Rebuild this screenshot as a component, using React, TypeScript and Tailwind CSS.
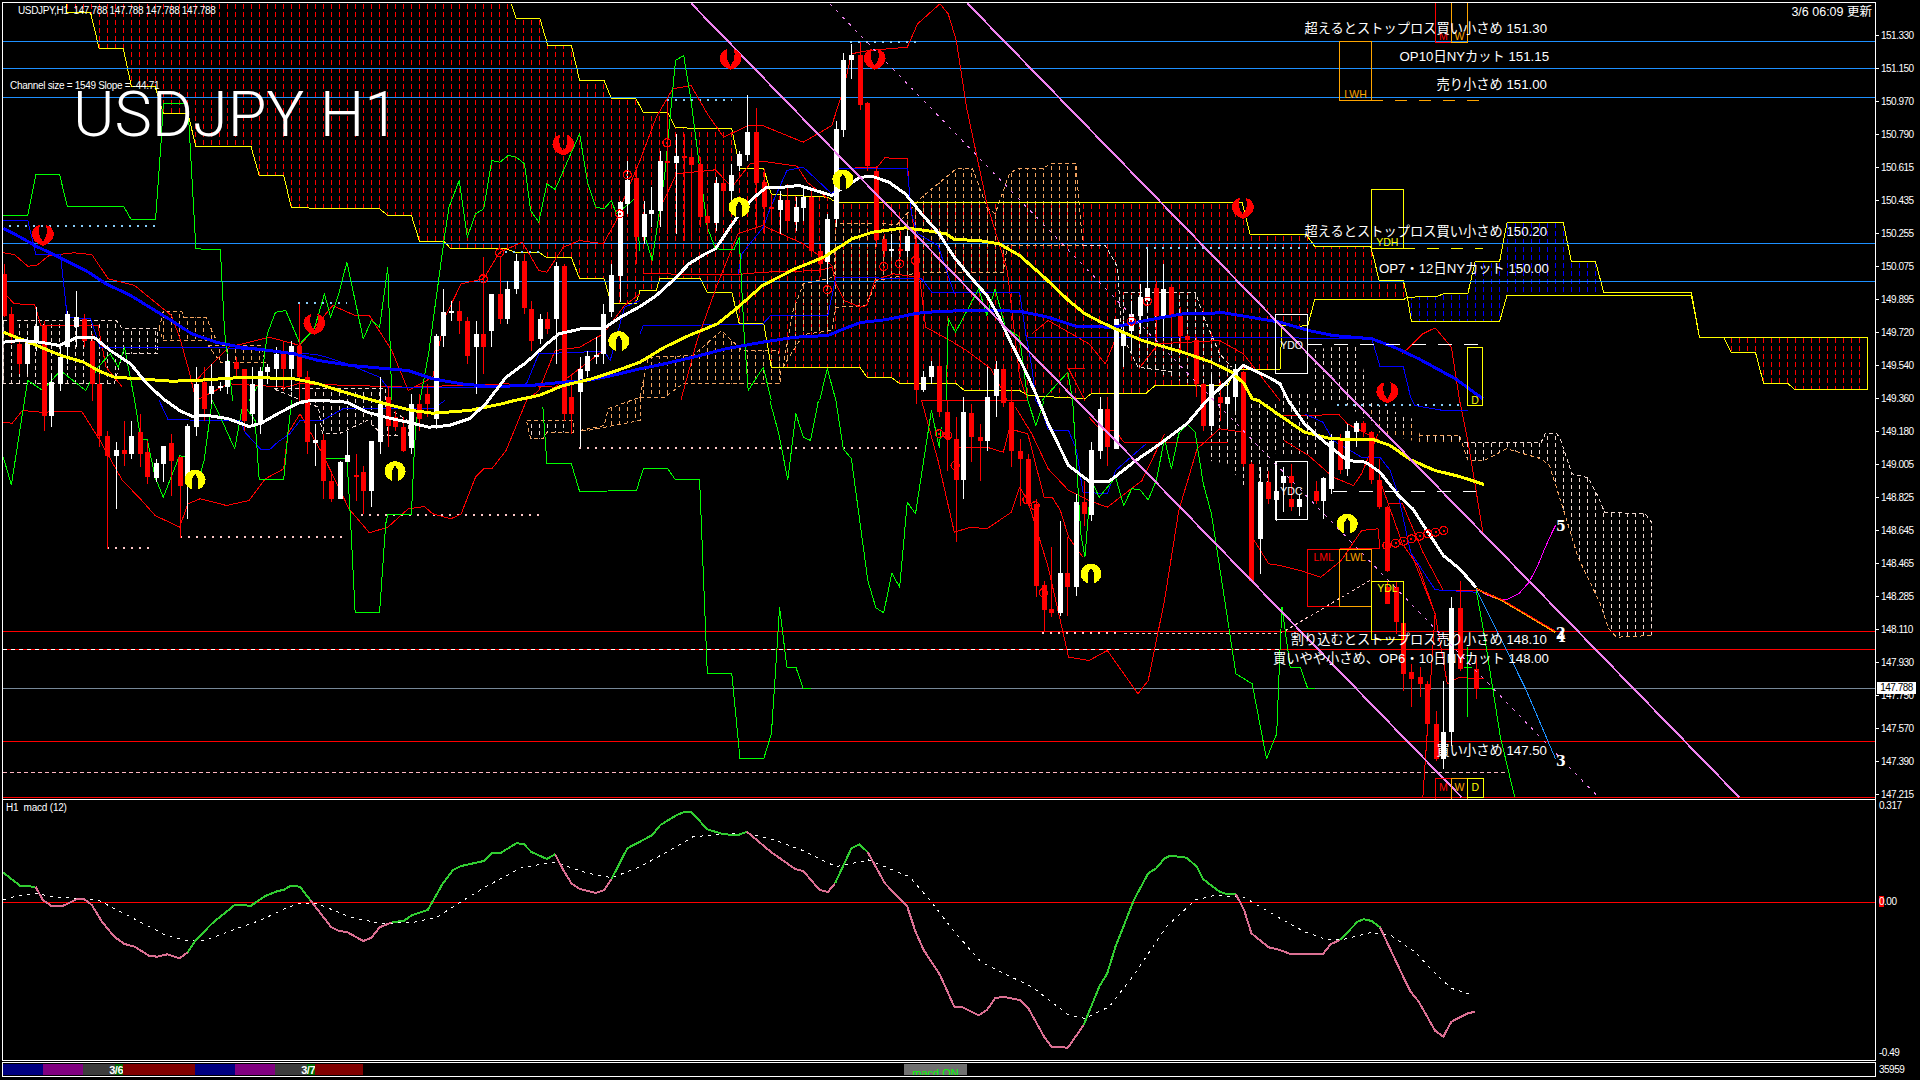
import React from 'react';

type P = [number, number];
const T: Record<string, P> = { a: [0, 0], b: [640, 0], c: [1280, 0], d: [0, 400], e: [640, 400], f: [1280, 400], g: [0, 790], h: [640, 790], i: [1280, 790] };

function parse(s: string): P[] {
  let o: P = [0, 0];
  const out: P[] = [];
  for (const tk of s.trim().split(/\s+/)) {
    if (tk.endsWith(':')) { o = T[tk[0]]; continue; }
    const [x, y] = tk.split(',').map(Number);
    out.push([+(o[0] + x / 2.45).toFixed(1), +(o[1] + y / 3).toFixed(1)]);
  }
  return out;
}
const str = (p: P[]) => p.map((q) => q.join(',')).join(' ');

const Line = ({ d, c, w = 1, dash }: { d: string; c: string; w?: number; dash?: string }) => (
  <polyline points={str(parse(d))} fill="none" stroke={c} strokeWidth={w} strokeDasharray={dash} strokeLinejoin="round" />
);

let hid = 0;
const Hatch = ({ d, c, dash = '5 3', off = 0, outline }: { d: string; c: string; dash?: string; off?: number; outline?: string }) => {
  const pts = parse(d);
  const id = `h${hid++}`;
  const xs = pts.map((p) => p[0]);
  const ys = pts.map((p) => p[1]);
  const x0 = Math.floor((Math.min(...xs) - 3.5) / 8);
  const x1 = Math.ceil((Math.max(...xs) - 3.5) / 8);
  const lines: React.ReactNode[] = [];
  for (let k = x0; k <= x1; k++) {
    const x = 3.5 + 8 * k;
    lines.push(<line key={k} x1={x} x2={x} y1={Math.min(...ys)} y2={Math.max(...ys)} stroke={c} strokeDasharray={dash} strokeDashoffset={off} />);
  }
  return (
    <g>
      <clipPath id={id}><polygon points={str(pts)} /></clipPath>
      <g clipPath={`url(#${id})`}>{lines}</g>
      {outline && <polygon points={str(pts)} fill="none" stroke={outline} strokeDasharray="4 3" />}
    </g>
  );
};

const Candles = ({ t, s }: { t: string; s: string }) => {
  const o = T[t];
  return (
    <g>
      {s.split(';').map((row, i) => {
        const r = row.trim().split(/\s+/);
        if (r.length < 4) return null;
        const x = Math.round(o[0] + +r[0] / 2.45);
        const bt = o[1] + +r[1] / 3;
        const bb = o[1] + +r[2] / 3;
        const c = r[3] === 'r' ? '#ff0000' : '#ffffff';
        const wt = r[4] ? o[1] + +r[4] / 3 : bt;
        const wb = r[5] ? o[1] + +r[5] / 3 : bb;
        return (
          <g key={i}>
            <rect x={x} y={wt} width={1} height={Math.max(wb - wt, 1)} fill={c} />
            <rect x={x - 2} y={bt} width={5} height={Math.max(bb - bt, 2)} fill={c} />
          </g>
        );
      })}
    </g>
  );
};

const SymR = ({ at }: { at: string }) => {
  const [[x, y]] = parse(at);
  return <path transform={`translate(${x} ${y})`} fill="#ff0000" d="M-3,-10 C-14,-7 -14,7 0,11 C14,7 14,-7 3,-10 C5,-4 4,2 1,5 L0,7 L-1,5 C-4,2 -5,-4 -3,-10Z" />;
};
const SymY = ({ at }: { at: string }) => {
  const [[x, y]] = parse(at);
  return (
    <g transform={`translate(${x} ${y})`}>
      <ellipse rx={10.5} ry={10} fill="#ffff00" />
      <path fill="#000" d="M-3,10 L-3,-1 L0,-6 L3,-1 L3,10Z" />
    </g>
  );
};
const Circ = ({ at }: { at: string }) => (
  <g>
    {parse(at).map(([x, y], i) => (
      <g key={i}>
        <circle cx={x} cy={y} r={4} fill="none" stroke="#ff0000" strokeWidth={1.3} />
        <rect x={x - 1} y={y - 1} width={2} height={2} fill="#ff0000" />
      </g>
    ))}
  </g>
);
const Box = ({ d, c, label, lx, ly }: { d: string; c: string; label?: string; lx?: number; ly?: number }) => {
  const [[x0, y0], [x1, y1]] = parse(d);
  return (
    <g>
      <rect x={x0} y={y0} width={x1 - x0} height={y1 - y0} fill="none" stroke={c} />
      {label && <text shapeRendering="auto" x={(x0 + x1) / 2 + (lx ?? 0)} y={ly ?? y1 - 3} textAnchor="middle" fontSize={10.5} fill={c} stroke="none">{label}</text>}
    </g>
  );
};

const H = ({ y, c, dash, x0 = 3, x1 = 1875, w = 1 }: { y: number; c: string; dash?: string; x0?: number; x1?: number; w?: number }) => (
  <line x1={x0} x2={x1} y1={y} y2={y} stroke={c} strokeDasharray={dash} strokeWidth={w} />
);

const CandlesA = `10 820 945 r 790 950; 27 940 1010 r 920 1030; 47 1030 1090 r 1010 1120; 67 1020 1090 w 1010 1120; 87 975 1020 w 920 1050; 107 975 1245 r 960 1290; 125 1145 1245 w 1120 1280; 146 1068 1150 w 1040 1170; 165 940 1040 w 930 1090; 185 950 978 w 870 1040; 205 955 1020 r 940 1040; 225 1020 1150 r 1000 1200; 243 1150 1305 r 1120 1340; 263 1305 1365 r 1290 1645; 283 1348 1365 w 1323 1525; 303 1348 1360 r 1260 1395; 322 1305 1360 w 1260 1375; 342 1295 1360 r 1240 1400; 361 1355 1430 r 1320 1450; 381 1387 1432 w 1375 1445; 400 1335 1390 w 1335 1445; 420 1328 1380 r 1300 1485; 440 1370 1455 r 1370 1612; 459 1275 1425 w 1270 1555; 479 1150 1278 w 1100 1305; 500 1145 1225 r 1100 1260; 518 1155 1180 w 1090 1210; 538 1155 1160 w 1145 1170; 557 1080 1160 w 1060 1180; 577 1085 1105 r 1070 1130; 597 1105 1260 r 1105 1290; 617 1150 1240 w 1100 1270; 636 1110 1270 w 1100 1300; 655 1100 1115 w 1090 1150; 675 1060 1105 w 1040 1160; 694 1060 1105 r 1020 1170; 714 1035 1105 w 1020 1170; 733 1035 1130 r 910 1200; 753 1130 1325 r 1110 1360; 772 1318 1328 w 1270 1395; 792 1318 1442 r 1300 1495; 812 1440 1495 r 1420 1505; 832 1383 1495 w 1380 1495; 851 1363 1385 w 1290 1385; 871 1422 1428 r 1360 1500; 890 1415 1470 r 1395 1540; 910 1322 1470 w 1320 1520; 930 1210 1325 w 1130 1360; 950 1190 1275 r 1160 1340; 968 1250 1278 r 1230 1290; 988 1278 1350 r 1250 1355; 1008 1210 1343 w 1180 1360; 1027 1210 1255 r 1180 1290; 1047 1180 1210 r 1150 1250; 1067 1005 1255 w 1000 1285; 1086 935 1005 w 865 1040; 1106 930 935 w 900 960; 1125 930 960 r 900 1000; 1145 960 1065 r 950 1090; 1165 1000 1040 w 960 1180; 1184 1000 1040 r 770 1120; 1204 880 990 w 880 1040; 1224 880 955 r 770 970; 1243 865 955 w 840 970; 1263 782 865 w 760 880; 1283 782 922 r 760 940; 1302 925 1020 r 900 1050; 1322 955 1015 w 940 1030; 1341 955 985 r 935 1000; 1361 795 955 w 785 1090; 1381 795 1240 r 790 1260; 1400 1190 1240 r 1120 1300; 1420 1105 1175 w 1070 1340; 1439 1065 1110 w 1050 1130; 1459 1062 1068 w 1010 1090; 1478 940 1060 w 910 1090; 1498 822 935 w 790 950; 1518 605 825 w 600 905; 1537 537 610 w 480 640; 1557 533 710 r 500 790`;
const CandlesB = `9 640 710 w 600 730; 28 628 640 w 560 680; 48 480 630 w 450 680; 67 480 488 r 300 700; 87 465 488 w 400 700; 107 465 470 r 400 720; 126 468 492 r 450 720; 146 490 650 r 470 680; 165 645 668 r 620 700; 185 547 668 w 530 690; 204 547 572 r 500 640; 224 522 570 w 490 640; 243 460 495 w 450 510; 263 395 462 w 282 480; 283 395 548 r 322 680; 303 545 620 r 505 700; 322 618 625 r 580 660; 342 597 627 w 570 700; 361 597 660 r 550 690; 381 618 665 w 590 690; 400 590 622 w 560 660; 420 590 752 r 570 770; 440 752 790 r 730 830; 459 655 785 w 640 850; 479 385 655 w 360 680; 498 178 388 w 158 410; 518 162 178 w 130 235; 538 162 312 r 125 328; 557 308 495 r 305 510; 577 510 718 r 495 740; 597 715 752 r 700 770; 616 745 750 w 700 770; 636 745 750 r 690 770; 655 705 752 w 690 770; 675 730 1168 r 710 1210; 694 1130 1168 w 1110 1175; 714 1095 1130 w 1080 1150; 733 1095 1235 r 1050 1250; 753 1233 1315 r 1200 1410; 773 1315 1438 r 1250 1625; 792 1235 1438 w 1190 1495; 812 1237 1310 r 1210 1385; 832 1310 1322 r 1270 1440; 851 1190 1322 w 1100 1350; 871 1105 1185 w 1080 1250; 890 1105 1208 r 1090 1220; 910 1205 1350 r 1160 1400; 930 1350 1375 r 1315 1515; 950 1375 1510 r 1360 1515; 969 1510 1755 r 1495 1790; 989 1752 1828 r 1740 1895; 1008 1825 1838 r 1640 1848; 1028 1717 1838 w 1560 1845; 1047 1717 1760 r 1610 1845; 1067 1503 1760 w 1480 1785; 1087 1503 1540 r 1440 1575; 1106 1348 1543 w 1325 1560; 1126 1225 1350 w 1190 1375; 1145 1225 1340 r 1190 1395; 1165 955 1345 w 955 1200; 1184 1000 1035 w 960 1100; 1204 940 990 w 900 1050; 1224 890 945 w 850 1000; 1243 862 900 w 745 930; 1263 862 945 r 840 1020; 1282 865 950 w 790 1010; 1302 860 945 r 850 1010; 1322 945 1005 r 920 1060; 1341 1005 1018 r 1000 1060; 1361 1018 1150 r 1010 1190; 1380 1150 1275 r 1150 1290; 1400 1150 1275 w 1120 1290; 1420 1190 1208 r 1140 1260; 1439 1190 1210 w 1140 1280; 1458 1105 1190 w 1090 1230; 1478 1115 1390 r 1110 1400; 1498 1390 1740 r 1385 1745; 1518 1445 1615 w 1400 1720; 1538 1445 1495 r 1410 1510; 1557 1472 1498 w 1380 1560`;
const CandlesF = `8 225 248 w 200 335; 28 225 248 r 190 330; 28 295 318 r 280 330; 47 295 318 w 280 345; 87 270 300 r 240 310; 106 232 300 w 230 355; 126 120 265 w 100 280; 146 115 208 r 100 220; 165 90 205 w 70 225; 185 68 95 w 60 140; 204 68 95 r 60 110; 224 95 238 r 90 250; 243 238 320 r 175 325; 263 318 512 r 315 515; 263 560 610 r 540 610; 283 560 665 r 540 700; 302 668 820 r 665 870; 322 815 835 r 790 920; 342 828 850 r 800 890; 361 850 970 r 840 1000; 381 970 1075 r 930 1080; 400 995 1075 w 840 1105; 420 622 995 w 590 1035; 440 622 805 r 540 810; 479 805 865 r 770 895`;

const cloudRed = `a: 1253,10 1265,55 1323,55 1342,135 1400,135 1420,240 1480,240 1498,295 1558,295 b: 8,335 68,335 87,382 225,385 245,505 303,505 322,582 460,590 480,605 1475,605 1495,703 1568,703 c: 65,703 85,738 222,738 230,775 243,840 302,840 312,890 302,898 85,898 68,975 40,978 5,975 b: 1568,1108 1460,1108 1440,1155 1262,1155 1240,1178 1105,1180 1090,1195 950,1185 930,1170 795,1170 775,1150 637,1150 615,1130 556,1130 540,1102 322,1102 303,968 243,968 225,875 165,875 148,835 48,835 40,870 0,870 a: 1558,910 1498,910 1480,835 1420,835 1400,772 1340,772 1320,755 1262,755 1240,745 1105,745 1088,723 1028,723 1008,645 950,645 930,625 714,622 695,525 635,525 615,438 480,438 460,338 400,338 380,258 322,258 302,145 243,145 222,37 163,37 163,10`;
const stairU = `a: 1253,10 1265,55 1323,55 1342,135 1400,135 1420,240 1480,240 1498,295 1558,295 b: 8,335 68,335 87,382 225,385 245,505 303,505 322,582 460,590 480,605 1475,605 1495,703 1568,703 c: 65,703 85,738 222,738 230,775 243,840 302,840 312,890 385,888 400,880 460,880 478,784 538,784 556,667 694,667 714,784 773,784 793,875 1008,875 1028,1012 1438,1012`;
const stairL = `a: 163,10 163,37 222,37 243,145 302,145 322,258 380,258 400,338 460,338 480,438 615,438 635,525 695,525 714,622 930,625 950,645 1008,645 1028,723 1088,723 1105,745 1240,745 1262,755 1320,755 1340,772 1400,772 1420,835 1480,835 1498,910 1558,910 b: 0,870 40,870 48,835 148,835 165,875 225,875 243,968 303,968 322,1102 540,1102 556,1130 615,1130 637,1150 775,1150 795,1170 930,1170 950,1185 1090,1195 1105,1180 1240,1178 1262,1155 1440,1155 1460,1108 1568,1108 c: 5,975 40,978 68,975 85,898 302,898 312,890 322,963 538,963 556,885 1008,885 1028,1012`;
const blueCloud = `c: 312,890 385,888 400,880 460,880 478,784 538,784 556,667 694,667 714,784 773,784 793,875 1008,875 1028,885 556,885 538,963 322,963`;
const redTail = `c: 1028,1012 1438,1012 1438,1168 1262,1168 1245,1150 1185,1150 1165,1056 1106,1056 1088,1012`;

const PALE = '#f0d8d0';
const TAN = '#f4a460';

function MainChart() {
  return (
    <svg className="absolute inset-0 w-full h-full" viewBox="3 3 1872 795" shapeRendering="crispEdges">
      <Hatch d={cloudRed} c="#ff0000" />
      <Hatch d={blueCloud} c="#0000ff" />
      <Hatch d={redTail} c="#ff0000" />

      <Hatch d="a: 8,960 285,960 300,985 385,985 385,1060 300,1060 280,1150 8,1150" c={PALE} dash="4 3" off={4} outline={PALE} />
      <Hatch d="a: 390,985 400,932 445,932 450,950 505,950 530,1020 400,1020" c={TAN} dash="4 3" off={4} outline={TAN} />
      <Hatch d="a: 510,1035 640,1035 650,1085 540,1085" c={TAN} dash="4 3" off={4} outline={TAN} />
      <Hatch d="a: 670,1165 945,1165 945,1220 1000,1260 1000,1305 940,1305 900,1260 830,1300 790,1300 780,1220" c={PALE} dash="4 3" off={4} outline={PALE} />
      <Hatch d="d: 1290,60 1405,60 1405,95 1340,95 1330,115 1300,115" c={PALE} dash="4 3" off={4} outline={TAN} />
      <Hatch d="d: 1420,90 1480,75 1490,25 1568,-10 1568,60 1440,90" c={TAN} dash="4 3" off={4} outline={TAN} />
      <Hatch d="b: 0,1190 20,1070 130,1065 200,990 250,1050 340,1050 345,1150 105,1150 60,1190" c={TAN} dash="4 3" off={4} outline={TAN} />
      <Hatch d="b: 350,1100 375,930 400,850 475,830 480,670 560,668 630,672 690,590 775,505 815,505 850,620 870,640 905,520 925,503 990,503 1005,488 1068,488 1075,600 1085,735 900,735 890,815 690,815 580,840 555,915 480,920 470,990 400,1002" c={TAN} dash="4 3" off={4} outline={TAN} />
      <Hatch d="b: 1180,880 1360,875 1385,960 1420,1060 1450,1100 1460,1200 1250,1110 1220,1100 1180,1000" c={PALE} dash="4 3" off={4} />
      <Line d="b: 1085,735 1140,735 1170,800 1180,1000 1220,1100 1310,1115" c={PALE} dash="4 3" />
      <Line d="b: 1185,875 1360,875 1385,960 1420,1060 1450,1100" c={PALE} dash="4 3" />
      <Hatch d="c: 70,1050 185,1030 205,1110 215,1200 f: 335,60 340,100 250,95 150,0 70,0" c={PALE} dash="4 3" off={4} />
      <Hatch d="f: 215,20 240,40 250,90 305,90 325,60 345,105 445,105 450,125 340,125 240,95" c={TAN} dash="4 3" off={4} />
      <Hatch d="f: 0,-30 70,-30 100,60 105,170 40,170 0,160" c={PALE} dash="4 3" off={4} />
      <Hatch d="e: 1385,100 1390,180 1440,190 1480,260 1500,370 1520,340 1568,100 1568,0 1385,0" c={PALE} dash="4 3" off={4} />
      <Hatch d="f: 340,105 440,105 450,125 640,125 650,100 678,98 690,125 715,220 755,232 780,290 795,335 895,340 910,365 910,705 825,710 805,685 785,610 730,470 695,330 660,195 640,175 555,145 500,180 460,180 450,125 350,125" c={PALE} dash="4 3" off={4} />
      <Line d="f: 450,125 640,125 650,100 678,98 690,125 715,220 755,232 780,290 795,335 895,340 910,365 910,705" c={PALE} dash="4 3" />
      <Line d="f: 340,105 440,105 460,180 500,180 555,145 640,175 660,195 695,330 730,470 785,610 805,685 825,710 910,705" c={TAN} dash="4 3" />

      <Line d={stairL} c="#ffff00" />
      <Line d={stairU} c="#ffff00" />
      <Line d="c: 1028,1012 1088,1012 1106,1056 1165,1056 1185,1150 1245,1150 1262,1168 1440,1168 1440,1012 1028,1012" c="#ffff00" />

      <H y={41} c="#1e90ff" />
      <H y={68} c="#1e90ff" />
      <H y={97} c="#1e90ff" />
      <H y={243} c="#1e90ff" />
      <H y={281} c="#1e90ff" />
      <H y={631} c="#ff0000" />
      <H y={649} c="#ff0000" />
      <H y={649} c="#ffffff" dash="4 4" x1={1280} />
      <H y={688} c="#778899" />
      <H y={741} c="#ff0000" />
      <H y={772} c="#ffb6c1" dash="4 3" x1={1508} />
      <H y={797} c="#ff0000" />

      {/* dotted range lines */}
      <g strokeWidth={2}>
        <Line d="a: 22,677 380,677" c="#87cefa" w={2} dash="2 6" />
        <Line d="b: 515,125 690,125" c="#87cefa" w={2} dash="2 6" />
        <Line d="b: 65,298 225,298" c="#87cefa" w={2} dash="2 6" />
        <Line d="a: 730,908 850,908" c="#87cefa" w={2} dash="2 6" />
        <Line d="a: 1238,755 1320,755" c="#87cefa" w={2} dash="2 6" />
        <Line d="b: 1240,743 1568,743 c: 65,743" c="#87cefa" w={2} dash="2 6" />
        <Line d="f: 140,13 440,13" c="#87cefa" w={2} dash="2 6" />
        <Line d="d: 262,443 380,443" c="#ffc8c8" w={2} dash="2 6" />
        <Line d="d: 440,410 850,410" c="#ffc8c8" w={2} dash="2 6" />
        <Line d="d: 885,342 1320,342" c="#ffc8c8" w={2} dash="2 6" />
        <Line d="d: 1418,143 1568,143 e: 690,143" c="#ffc8c8" w={2} dash="2 6" />
        <Line d="e: 985,698 1165,698" c="#ffc8c8" w={2} dash="2 6" />
        <Line d="e: 1185,700 1568,700 f: 220,540" c="#ffc8c8" dash="3 3" />
      </g>

      {/* thin red bands */}
      <Line c="#ff0000" d="a: 8,757 35,762 68,797 90,795 120,765 180,757 225,762 265,835 330,855 385,910 420,945 440,1010 465,1120 480,1200" />
      <Line c="#ff0000" d="a: 8,875 35,910 85,912 100,975 240,975 260,1100 300,1160" />
      <Line c="#ff0000" d="a: 480,1140 560,1040 660,1010 735,1035 815,915 870,945 905,945 960,1050 1000,1170 1060,1130 1090,950 1130,850 1185,835 1224,755 1280,725 1320,810 1340,815 1380,740 1420,720 1478,730 1510,660 1530,590 1568,480 b: 40,350 80,265 125,255 165,340 205,410 265,375 300,375 400,425 470,375 500,260 518,160 560,150 655,140 680,70 735,10 755,40 775,120 800,320 850,610 900,810 930,1130 950,1200 e: 690,0 730,180 770,395 810,380 850,385 910,335 930,260 950,300 1000,500 1050,770 1100,780 1145,750 1220,880 1245,840 1285,600 1320,330 1365,145 1420,85 1478,95" />
      <Line c="#ff0000" d="d: 8,65 30,68 55,30 100,35 200,32 245,120 300,240 340,290 380,345 440,380 460,310 490,295 555,315 610,300 650,235 695,205 705,100 735,40 790,160 855,325 905,397 950,380 1000,325 1040,318 1060,340 1105,355 1130,340 1165,230 1185,205 1205,205 1240,150 1290,0 a: 1320,1170 1360,1050 1420,1040 1478,1000 1530,915 1568,880" />
      <Line c="#ff0000" d="b: 100,1200 140,1020 190,850 240,700 300,675 400,730 470,795 480,850 500,900 540,920 555,915 575,840 620,820 680,830" />
      <Line c="#ff0000" d="b: 8,820 240,822 300,815 440,810 470,800" />
      <Line c="#ff0000" d="b: 50,620 90,520 185,508 225,560 270,490 300,482 385,497 410,545 460,595" />
      <Line c="#ff0000" d="b: 480,600 480,503 580,502 600,472 655,475 660,580 680,780 700,980 760,1020 800,1050 860,1105 900,1200" />
      <Line c="#ff0000" d="a: 480,1200 560,1150 700,1160 730,1150 1000,1160 1240,1150 1360,1160 1478,1050" />
      <Line c="#ff0000" d="b: 960,1000 1000,960 1100,1030 1140,1090 1170,1000" />
      <Line c="#ff0000" d="b: 1225,1100 1270,1030 1420,1020 1478,1060 1568,1200" />
      <Line c="#ff0000" d="b: 1090,1105 1050,1105 1090,1200" />
      <Line c="#ff0000" d="e: 920,20 960,100 1000,205 1050,270 1100,300 1145,320 1230,240 1285,100" />
      <Line c="#ff0000" d="e: 770,140 810,140 850,140 890,155 905,85 950,100 990,290 1010,290 1030,330 1050,410 1085,470" />
      <Line c="#ff0000" d="e: 1185,125 1440,125" />
      <Line c="#ff0000" d="e: 1100,50 1130,90 1165,90 1185,125" />
      <Line c="#ff0000" d="e: 1505,420 1540,490 1568,495" />
      <Line c="#ff0000" d="c: 300,1060 350,1000 380,982 420,1040 440,1200 f: 460,120 497,395" />
      <Line c="#ff0000" d="f: 0,45 145,43 165,70 245,120" />
      <Line c="#ff0000" d="f: 10,120 70,165 130,230 180,255 200,220 240,100" />
      <Line c="#ff0000" d="f: 0,495 50,510 100,530 150,480 200,390 240,385 245,445" />
      <Line c="#ff0000" d="f: 265,310 300,310 350,455 400,570 480,570" />
      <Line c="#ff0000" d="f: 245,240 300,430 340,500 380,640 410,850 440,830 480,835 500,835" />
      <Line c="#ff0000" d="f: 320,455 380,640 350,1190" />
      <Line c="#ff0000" d="f: 146,445 245,445" />

      {/* thin blue */}
      <Line c="#0000ff" d="a: 8,660 68,660 88,762 148,762 165,950 222,955 245,1040 300,1042 550,1042 775,1062 800,1070 850,1090 930,1130 950,1162 1200,1162 1290,1150 1320,1060 1480,1052 1495,1080 1530,920 1568,900" />
      <Line c="#0000ff" d="d: 390,0 412,58 590,60 600,95 640,148 660,148 680,125 710,100 735,60 790,60 840,25 900,25 1060,25 1090,0" />
      <Line c="#0000ff" d="b: 0,1000 8,975 300,972 320,945 460,945 480,830 690,835 715,875 930,875 945,1000 960,1100 970,1200 e: 985,30 1000,88 1050,90 1070,150 1085,275 1145,280 1165,210 1240,130" />
      <Line c="#0000ff" d="b: 240,820 250,760 302,680 320,620 360,510 400,500 470,580 490,555" />
      <Line c="#0000ff" d="b: 480,503 655,503 665,640 680,700 730,735 770,880" />
      <Line c="#0000ff" d="b: 950,1012 1568,1012 c: 225,1015 245,1098 302,1098 320,1190 f: 330,15 400,30 460,30" />
      <Line c="#0000ff" d="f: 60,40 105,65 130,120 200,170 245,170 270,210 290,285 320,455 380,568 480,575" />

      {/* green */}
      <Line c="#00ff00" d="a: 8,645 68,645 88,522 146,522 165,618 303,618 322,658 381,658 395,420 400,310 460,310 480,745 540,748 550,990 570,1200" />
      <Line c="#00ff00" d="a: 60,1200 68,1140 105,1170 148,1110 210,1170 240,1100 270,1060 290,1100 305,1040 330,1200 d: 345,118 361,118 380,230 400,290 440,165 455,170 480,268 500,180 520,0 540,50 575,145 595,10 625,60 635,238 695,238 705,100 715,0" />
      <Line c="#00ff00" d="d: 8,170 28,253 60,0" />
      <Line c="#00ff00" d="a: 610,1200 640,1140 655,1000 675,935 700,930 735,1030 770,985 795,880 810,950 830,880 850,785 890,1015 910,960 930,980 950,800 960,1200" />
      <Line c="#00ff00" d="d: 790,175 850,175 858,340 870,635 930,635 945,370 950,342 1008,342 1015,150 1020,60 a: 1050,1060 1090,700 1100,620 1125,540 1145,710 1165,640 1185,625 1205,480 1225,485 1245,465 1265,470 1285,490 1300,630 1320,665 1340,550 1360,567 1420,400 1440,550 1460,620 1480,625 1498,600 1510,640 1530,620 1555,595 1568,750" />
      <Line c="#00ff00" d="b: 8,690 30,780 60,530 87,180 107,165 125,300 165,680 185,745 230,748 243,710 255,1000 265,1170 302,1100 322,1200" />
      <Line c="#00ff00" d="d: 1330,20 1340,190 1400,190 1420,273 1560,270 1568,235 e: 8,205 68,205 87,238 146,238 165,820 225,820 245,1075 303,1075 322,1000 330,850 342,620 360,800 382,800 400,865 418,865" />
      <Line c="#00ff00" d="b: 440,1200 459,1105 480,1200 e: 480,0 498,145 518,175 558,540 578,622 597,637 617,518 636,560 655,305 675,340 714,30 733,140 738,80" />
      <Line c="#00ff00" d="e: 318,0 340,100 362,238 382,40 400,110 418,120 437,0" />
      <Line c="#00ff00" d="b: 750,1200 755,955 773,995 810,910 830,865 850,945 870,865 895,980 930,1010 950,1200 e: 970,75 990,0" />
      <Line c="#00ff00" d="b: 985,1200 1048,1115 1060,1200 e: 1065,100 1080,400 1090,470 1100,320 1110,250 1125,290 1165,230 1185,315 1205,265 1225,268 1245,298 1265,240 1285,115 1302,205 1320,100 1340,70 1360,95 1380,250 1400,340 1440,660 1460,820 1500,850 1535,1075 1560,1000 1568,750 f: 5,620 25,800 50,800 68,865 85,865" />
      <Line c="#00ff00" d="f: 480,565 500,700 540,1010 575,1190" />
      <Line c="#00ff00" d="f: 459,740 459,950" />
      <Line c="#00ff00" d="f: 450,800 470,800" />
      <Line c="#00ff00" d="f: 490,865 525,865" />

      <Candles t="a" s={CandlesA} />
      <Candles t="b" s={CandlesB} />
      <Candles t="f" s={CandlesF} />

      {/* moving averages */}
      <Line c="#0000ff" w={3} d="a: 8,683 50,710 90,738 145,770 210,810 260,850 320,885 360,915 420,960 470,1000 530,1025 590,1040 660,1050 720,1060 780,1080 860,1095 950,1105 1000,1110 1060,1135 1130,1150 1200,1158 1300,1155 1380,1145 1440,1140 1500,1125 1568,1105 b: 60,1090 130,1070 210,1045 300,1025 380,1010 460,1005 500,985 540,966 600,958 680,938 740,932 840,930 930,932 1000,950 1070,978 1160,980 1230,962 1330,940 1430,937 1568,965 c: 70,990 130,1005 225,1015 280,1040 340,1075 430,1135 497,1195" />
      <Line c="#ffff00" w={3} d="a: 8,995 60,1020 100,1040 150,1065 205,1085 240,1110 280,1130 340,1135 420,1142 480,1140 600,1130 720,1135 780,1150 830,1170 900,1195 d: 960,15 1010,30 1060,38 1150,30 1230,10 1260,0 a: 1320,1185 1380,1155 1450,1135 1500,1115 1568,1085 b: 60,1040 120,1005 190,970 240,920 300,855 380,805 450,770 520,715 570,695 650,682 700,690 750,700 770,717 830,720 880,730 930,765 990,830 1050,900 1090,940 1130,965 1165,985 1230,1020 1330,1055 1400,1085 1450,1115 1480,1150 1500,1195 e: 1515,0 1568,45 f: 60,95 125,115 230,118 270,135 320,178 380,210 440,228 500,252" />
      <Line c="#ffffff" w={3} d="a: 8,1025 50,1020 100,1025 145,1035 190,1010 230,1010 270,1050 320,1090 360,1150 400,1195 d: 440,30 470,47 510,45 560,55 610,78 640,68 680,40 730,8 760,0 790,0 850,5 900,35 950,52 1000,65 1050,80 1100,75 1150,55 1190,10 a: 1240,1130 1290,1085 1340,1030 1370,1000 1430,983 1480,983 1520,950 1568,918 b: 40,885 85,835 120,790 160,760 185,745 215,690 250,630 280,590 310,560 350,560 390,555 430,570 470,585 500,560 540,530 570,528 610,545 650,580 690,640 730,695 770,770 810,830 850,885 880,950 910,1030 940,1100 970,1180 e: 1000,70 1050,195 1100,242 1150,242 1215,180 1280,125 1340,70 1385,5 b: 1478,1095 1540,1130 1568,1150 f: 20,0 60,70 100,115 125,140 165,180 210,185 245,215 290,285 325,325 365,400 400,465 440,505 480,560" />

      {/* channel */}
      <Line c="#ee82ee" w={2} d="b: 125,8 f: 445,1190" />
      <Line c="#ee82ee" w={2} d="b: 802,8 f: 1125,1190" />
      <Line c="#ee82ee" dash="3 6" d="b: 465,10 f: 780,1190" />

      {/* projections */}
      <Line c="#ff00ff" d="f: 480,565 510,585 540,598 555,598 585,580 610,545 630,500 650,440 665,400 675,375" />
      <Line c="#ffa500" w={2} d="f: 480,565 545,600 675,695" />
      <Line c="#ff0000" d="f: 480,565 545,598 675,692" />
      <Line c="#1e90ff" d="f: 480,565 600,860 675,1075" />

      {/* boxes */}
      <Box d="c: 146,124 224,300" c="#ffa500" label="LWH" />
      <Box d="c: 381,-10 420,127" c="#ff0000" label="M" />
      <Box d="c: 420,-10 459,127" c="#ffa500" label="W" />
      <Line c="#ffa500" d="c: 224,300 497,300" dash="12 12" />
      <Box d="c: 224,567 302,745" c="#ffff00" label="YDH" />
      <Line c="#ffff00" d="c: 302,745 497,745" dash="12 12" />
      <Box d="b: 1557,943 c: 68,1120" c="#ffffff" label="YDO" ly={348} />
      <Line c="#ffffff" d="c: 68,1032 497,1032" dash="14 12" />
      <Box d="c: 459,1040 497,1216" c="#ffff00" />
      <text shapeRendering="auto" x={1475} y={403} textAnchor="middle" fontSize={10.5} fill="#ffff00">D</text>
      <Box d="e: 1556,182 f: 68,357" c="#ffffff" label="YDC" ly={494} />
      <Line c="#ffffff" d="f: 130,272 480,272" dash="14 12" />
      <Box d="f: 68,446 146,618" c="#ff0000" label="LML" ly={560} />
      <Box d="f: 146,446 224,618" c="#ffa500" label="LWL" ly={560} />
      <Box d="f: 224,542 302,718" c="#ffff00" label="YDL" ly={591} />
      <Box d="f: 381,1135 420,1200" c="#ff0000" label="M" ly={790} />
      <Box d="f: 420,1135 459,1200" c="#ffa500" label="W" ly={790} />
      <Box d="f: 459,1135 498,1190" c="#ffff00" label="D" ly={790} />

      <Circ at="a: 1184,835 1224,757 1518,640 1537,523 b: 66,427 597,798 636,790 675,780 459,868 1243,902 1204,962 e: 733,100 754,104 772,195 948,298 968,316 988,577 f: 262,435 283,428 303,422 322,415 342,407 362,400 381,395 401,390" />

      <SymR at="a: 105,703" />
      <SymR at="a: 770,970" />
      <SymR at="a: 1380,432" />
      <SymR at="b: 222,175" />
      <SymR at="b: 575,175" />
      <SymR at="b: 1477,622" />
      <SymR at="c: 263,1175" />
      <SymY at="a: 1516,1022" />
      <SymY at="d: 478,238" />
      <SymY at="d: 968,212" />
      <SymY at="b: 243,620" />
      <SymY at="b: 497,537" />
      <SymY at="e: 1105,520" />
      <SymY at="f: 165,370" />

      <g fontFamily="'DejaVu Serif', serif" fontWeight="bold" fontSize={14} fill="#fff">
        <text x={1556} y={530}>5</text>
        <text x={1556} y={637}>2</text>
        <text x={1556} y={641}>4</text>
        <text x={1556} y={765}>3</text>
      </g>
    </svg>
  );
}

const seg = (d: string, c: string, w: number, dash?: string) => <Line d={d} c={c} w={w} dash={dash} />;

function Macd() {
  const G = '#32cd32';
  const R = '#db7093';
  return (
    <svg className="absolute inset-0 w-full h-full" viewBox="3 800 1872 260" shapeRendering="crispEdges">
      <H y={902} c="#ff0000" />
      {seg('g: 8,330 40,318 87,310 130,320 190,325 240,330 300,368 400,432 450,450 500,452 570,420 640,390 700,355 735,340 775,340 860,382 930,400 1010,398 1070,382 1130,335 1190,290 1280,232 1360,217 1440,250 1500,263 1568,230 h: 60,190 130,140 205,133 262,130 330,150 400,182 480,230 560,210 660,260 710,330 770,425 835,515 890,550 960,590 1050,675 1090,685 1150,650 1210,555 1290,410 1360,330 1410,316 1480,322 1568,385 i: 60,425 110,447 160,447 220,428 270,435 330,485 380,550 420,595 475,617', '#ffffff', 1, '3 5')}
      {seg('g: 8,248 50,288 87,290', G, 2)}
      {seg('g: 87,290 105,330 125,347 155,347 190,326 205,326 225,345 250,395 280,440 305,462 330,470 365,497 385,500 410,493 440,505 460,487', R, 2)}
      {seg('g: 460,487 480,450 520,400 575,345 615,347 650,318 680,303 695,300 712,287 735,290 760,330', G, 2)}
      {seg('g: 760,330 785,370 812,412 830,423 850,426 890,453 910,443 930,412 960,397', R, 2)}
      {seg('g: 960,397 990,392 1010,375 1048,360 1085,280 1110,240 1130,228 1185,213 1205,190 1225,190 1265,160 1283,162 1302,186 1340,207 1360,193', G, 2)}
      {seg('g: 1360,193 1380,240 1400,280 1420,297 1460,309 1480,300 1498,268', R, 2)}
      {seg('g: 1498,268 1537,175 1568,155 h: 30,135 50,105 90,75 110,65 125,65 165,118 205,133 240,135 262,125', G, 2)}
      {seg('h: 262,125 320,185 380,237 400,243 440,300 460,306 478,280', R, 2)}
      {seg('h: 478,280 518,175 538,163 558,187', G, 2)}
      {seg('h: 558,187 600,280 655,350 675,425 695,480 735,555 770,650 790,652 830,676 850,660 870,625 890,620 930,630 950,652 990,740 1008,770 1048,773 1087,705', R, 2)}
      {seg('h: 1087,705 1125,590 1145,550 1165,470 1210,330 1245,250 1265,235 1285,205 1300,197 1340,203 1365,232 1380,268 1420,305 1440,313 1460,313', G, 2)}
      {seg('h: 1460,313 1480,360 1498,430 1540,472 1568,480 i: 25,492 105,492 125,462 147,450', R, 2)}
      {seg('i: 147,450 190,395 205,388 225,393 245,412', G, 2)}
      {seg('i: 245,412 300,555 320,605 340,635 380,722 400,740 420,695 460,670 478,665', R, 2)}
    </svg>
  );
}

const prices = ['151.330', '151.150', '150.970', '150.790', '150.615', '150.435', '150.255', '150.075', '149.895', '149.720', '149.540', '149.360', '149.180', '149.005', '148.825', '148.645', '148.465', '148.285', '148.110', '147.930', '147.750', '147.570', '147.390', '147.215'];

export default function App() {
  return (
    <div className="w-[1920px] h-[1080px] bg-black pt-[2px] pl-[2px] overflow-hidden font-['Liberation_Sans','Noto_Sans_CJK_JP',sans-serif] text-white">
      {/* main pane */}
      <div className="flex h-[797px]">
        <div className="relative w-[1874px] h-full border-t border-l border-r border-white overflow-hidden">
          <MainChart />
          <span className="absolute left-[15px] top-[2px] text-[10px] leading-[12px] tracking-[-0.35px] whitespace-pre">USDJPY,H1  147.788 147.788 147.788 147.788</span>
          <span className="absolute left-[7px] top-[77px] text-[10px] leading-[12px] tracking-[-0.3px] whitespace-pre">Channel size = 1549 Slope = -44.71</span>
          <span className="absolute left-[70px] top-[80px] font-['Roboto','Liberation_Sans',sans-serif] font-light text-[63px] leading-[64px] whitespace-nowrap">USDJPY H1</span>
          <span className="absolute right-[3px] top-[2px] text-[12.5px] leading-[14px] whitespace-nowrap">3/6 06:09 更新</span>
          <span className="absolute right-[328px] top-[19px] text-[13.25px] leading-[14px] whitespace-nowrap">超えるとストップロス買い小さめ 151.30</span>
          <span className="absolute right-[326px] top-[47px] text-[13.25px] leading-[14px] whitespace-nowrap">OP10日NYカット 151.15</span>
          <span className="absolute right-[328px] top-[75px] text-[13.25px] leading-[14px] whitespace-nowrap">売り小さめ 151.00</span>
          <span className="absolute right-[328px] top-[222px] text-[13.25px] leading-[14px] whitespace-nowrap">超えるとストップロス買い小さめ 150.20</span>
          <span className="absolute right-[326px] top-[259px] text-[13.25px] leading-[14px] whitespace-nowrap">OP7・12日NYカット 150.00</span>
          <span className="absolute right-[328px] top-[630px] text-[13.25px] leading-[14px] whitespace-nowrap">割り込むとストップロス売り小さめ 148.10</span>
          <span className="absolute right-[326px] top-[649px] text-[13.25px] leading-[14px] whitespace-nowrap">買いやや小さめ、OP6・10日NYカット 148.00</span>
          <span className="absolute right-[328px] top-[741px] text-[13.25px] leading-[14px] whitespace-nowrap">買い小さめ 147.50</span>
        </div>
        <div className="relative w-[44px] pt-[17px] flex flex-col text-[10px] tracking-[-0.5px]">
          {prices.map((p) => (
            <div key={p} className="h-[33px] flex items-center gap-[2px] shrink-0">
              <span className="w-[3px] h-px bg-white" />
              <span>{p}</span>
            </div>
          ))}
          <span className="absolute left-[1px] top-[680px] w-[39px] h-[12px] bg-white text-black leading-[12px] text-center">147.788</span>
        </div>
      </div>
      {/* macd pane */}
      <div className="flex h-[262px]">
        <div className="relative w-[1874px] h-full border border-white overflow-hidden">
          <Macd />
          <span className="absolute left-[3px] top-[2px] text-[10px] leading-[12px] tracking-[-0.2px] whitespace-pre">H1  macd (12)</span>
        </div>
        <div className="w-[44px] flex flex-col pl-[3px] text-[10px] leading-[12px] tracking-[-0.5px]">
          <span className="mt-px">0.317</span>
          <span className="mt-[84px]"><span className="bg-[#ff0000]">0</span>.00</span>
          <span className="mt-[139px]">-0.49</span>
        </div>
      </div>
      {/* bottom strip */}
      <div className="flex h-[15px] mt-px">
        <div className="w-[1874px] h-full border border-white flex items-stretch py-px text-[11px] font-bold">
          <div className="w-[40px] bg-[#000080]" />
          <div className="w-[40px] bg-[#800080]" />
          <div className="w-[40px] bg-[linear-gradient(to_right,#3c3c3c_32px,#006400_32px)] text-right leading-[12px] tracking-[-0.5px]">3/6</div>
          <div className="w-[72px] bg-[#800000]" />
          <div className="w-[40px] bg-[#000080]" />
          <div className="w-[40px] bg-[#800080]" />
          <div className="w-[40px] bg-[linear-gradient(to_right,#3c3c3c_32px,#006400_32px)] text-right leading-[12px] tracking-[-0.5px]">3/7</div>
          <div className="w-[48px] bg-[#800000]" />
          <div className="ml-[541px] w-[63px] bg-[#707070] overflow-hidden text-center font-normal text-[#00ff00] text-[11px] leading-[12px] pt-[3px]">macd ON</div>
        </div>
        <div className="w-[44px] pl-[3px] text-[10px] leading-[15px] tracking-[-0.5px]">35959</div>
      </div>
    </div>
  );
}
